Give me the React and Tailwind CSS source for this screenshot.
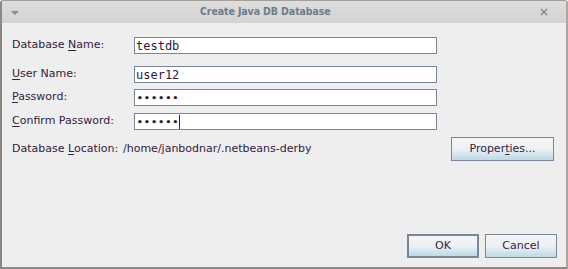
import React from "react";

const sans = { fontFamily: '"DejaVu Sans", sans-serif' };

function Mn({ children }) {
    return <span className="underline underline-offset-2 decoration-1">{children}</span>;
}

function Field({ children, caret, secret }) {
    return (
        <div className="w-[303px] h-[17px] border border-[#7a879b] bg-white flex items-center pl-[1px] text-[12px] text-[#2e1a3a] font-['DejaVu_Sans_Mono',monospace] leading-none">
            {secret ? (
                <span className="text-[9.5px] font-bold tracking-[1.4px] pl-[1px]">{children}</span>
            ) : (
                <span>{children}</span>
            )}
            {caret && <span className="w-px h-[14px] bg-[#3a1a40] -ml-[1px]" />}
        </div>
    );
}

function Button({ children, def, w }) {
    return (
        <div
            className={`${w} h-[24px] flex items-center justify-center text-[11px] text-[#33213f] bg-gradient-to-b from-[#f5f5f5] via-[#edf1f3] to-[#bcd9e8] ${def ? "border-2" : "border"} border-[#7a879b]`}
            style={sans}
        >
            {children}
        </div>
    );
}

function Row({ label, children, className }) {
    return (
        <div className={`flex items-center ${className}`}>
            <div className="w-[122px] text-[11px] text-[#33213f]" style={sans}>{label}</div>
            {children}
        </div>
    );
}

export default function App() {
    return (
        <div className="w-[568px] h-[269px] flex flex-col bg-[#eeeeee] border-l-2 border-b-2 border-r-2 border-t border-l-[#8c8883] border-b-[#8c8883] border-r-[#aaa6a2] border-t-[#a29e99] rounded-t-[3px] overflow-hidden">
            {/* title bar */}
            <div className="h-[22px] flex items-center px-[8px] bg-gradient-to-b from-[#dedede] to-[#d2d2d2] shrink-0">
                <svg width="8" height="6" viewBox="0 0 8 6" className="ml-[1px] mt-[1px]">
                    <path d="M0 1 L8 1 L4 5 Z" fill="#8a8c90" />
                </svg>
                <div className="ml-[181px] text-[10.5px] font-bold text-[#6f7b8b] font-['DejaVu_Sans_Condensed','DejaVu_Sans',sans-serif] tracking-[-0.1px]">
                    Create Java DB Database
                </div>
                <svg width="8" height="8" viewBox="0 0 8 8" className="ml-auto mr-[10px]">
                    <path d="M1 1 L7 7 M7 1 L1 7" stroke="#8a8c90" strokeWidth="1.6" />
                </svg>
            </div>

            {/* form */}
            <div className="flex flex-col pl-[10px] pr-[9px]">
                <Row className="mt-[14px]" label={<>Database <Mn>N</Mn>ame:</>}>
                    <Field>testdb</Field>
                </Row>
                <Row className="mt-[12px]" label={<><Mn>U</Mn>ser Name:</>}>
                    <Field>user12</Field>
                </Row>
                <Row className="mt-[6px]" label={<><Mn>P</Mn>assword:</>}>
                    <Field secret>••••••</Field>
                </Row>
                <Row className="mt-[7px]" label={<><Mn>C</Mn>onfirm Password:</>}>
                    <Field secret caret>••••••</Field>
                </Row>
                <div className="flex items-center mt-[7px]">
                    <div className="w-[111px] text-[11px] text-[#33213f]" style={sans}>
                        Database <Mn>L</Mn>ocation:
                    </div>
                    <div className="text-[11px] text-[#33213f]" style={sans}>/home/janbodnar/.netbeans-derby</div>
                    <div className="ml-auto mr-[3px]">
                        <Button w="w-[103px]">Proper<Mn>t</Mn>ies...</Button>
                    </div>
                </div>
                <div className="flex justify-end gap-[6px] mt-[73px]">
                    <Button def w="w-[72px]">OK</Button>
                    <Button w="w-[72px]">Cancel</Button>
                </div>
            </div>
        </div>
    );
}
